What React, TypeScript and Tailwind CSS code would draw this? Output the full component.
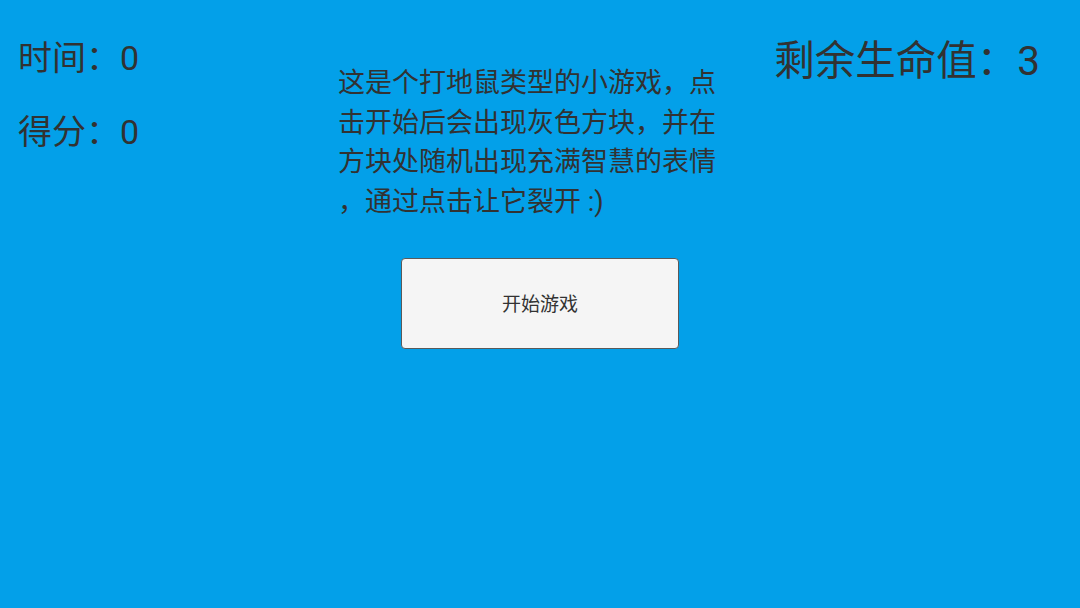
export default function App() {
  const font = { fontFamily: 'Roboto, "Noto Sans CJK SC", "Noto Sans", sans-serif' };
  return (
    <div className="w-[1080px] h-[608px] bg-[#03a0e9] text-[#323232] flex overflow-hidden" style={font}>
      <div className="w-[338px] pl-[18px] pt-[41px] flex flex-col">
        <div className="text-[34px] leading-none">时间：0</div>
        <div className="text-[34px] leading-none mt-[40px]">得分：0</div>
      </div>
      <div className="w-[400px] flex flex-col pt-[64px]">
        <div className="text-[27px] leading-[39.5px] whitespace-nowrap">
          <div>这是个打地鼠类型的小游戏，点</div>
          <div>击开始后会出现灰色方块，并在</div>
          <div>方块处随机出现充满智慧的表情</div>
          <div>，通过点击让它裂开 :)</div>
        </div>
        <button className="mt-[36px] ml-[63px] w-[278px] h-[91px] pt-[3px] bg-[#f5f5f5] border border-[#5a5a5a] rounded-[4px] flex items-center justify-center text-[19px] text-[#323232]">
          开始游戏
        </button>
      </div>
      <div className="flex-1 flex justify-end pr-[40px] pt-[41px]">
        <div className="text-[40.5px] leading-none whitespace-nowrap">剩余生命值：3</div>
      </div>
    </div>
  );
}
